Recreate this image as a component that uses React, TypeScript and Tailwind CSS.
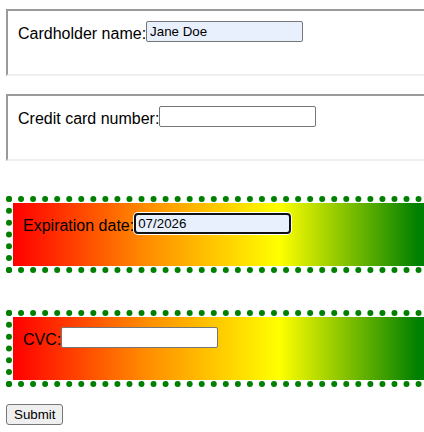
const labelFont = { fontFamily: '"Liberation Sans", Arial, sans-serif' }

function PlainField({ label, value }: { label: string; value?: string }) {
  return (
    <div className="w-[440px] border-2 border-t-[#9a9a9a] border-l-[#9a9a9a] border-b-[#efefef] border-r-[#efefef]">
      <div className="h-[63px] px-[10px] pt-[10px] text-[16px] leading-normal text-black">
        <label className="flex items-start">
          <span className="pt-[1px]">{label}</span>
          <input
            type="text"
            defaultValue={value}
            className={
              'h-[21px] w-[157px] rounded-[2px] border border-[#767676] px-[3px] text-[13.33px] text-black outline-none ' +
              (value ? 'bg-[#e8f0fe]' : 'bg-white')
            }
          />
        </label>
      </div>
    </div>
  )
}

function FancyField({
  label,
  value,
  focused,
}: {
  label: string
  value?: string
  focused?: boolean
}) {
  return (
    <div className="w-[440px] border-[6px] border-dotted border-[#008000] bg-white p-[1px]">
      <div className="h-[63px] bg-[linear-gradient(to_right,#ff0000_0px,#ff8c00_133px,#ffff00_266px,#008000_405px)] px-[10px] pt-[10px] text-[16px] leading-normal text-black">
        <label className="flex items-start">
          <span className="pt-[1px]">{label}</span>
          <input
            type="text"
            defaultValue={value}
            className={
              focused
                ? 'h-[21px] w-[157px] rounded-[4px] border-2 border-[#101010] bg-[#e8f0fe] px-[2px] text-[13.33px] text-black shadow-[0_0_0_1px_white] outline-none'
                : 'h-[21px] w-[157px] rounded-[2px] border border-[#767676] bg-white px-[3px] text-[13.33px] text-black outline-none'
            }
          />
        </label>
      </div>
    </div>
  )
}

export default function App() {
  return (
    <div className="h-[432px] w-[424px] overflow-hidden bg-white pl-[6px] pt-[9px]" style={labelFont}>
      <form onSubmit={(e) => e.preventDefault()}>
        <PlainField label="Cardholder name:" value="Jane Doe" />
        <div className="mt-[18px]">
          <PlainField label="Credit card number:" />
        </div>
        <div className="mt-[35px]">
          <FancyField label="Expiration date:" value="07/2026" focused />
        </div>
        <div className="mt-[37px]">
          <FancyField label="CVC:" />
        </div>
        <button
          type="submit"
          className="mt-[17px] h-[21px] rounded-[3px] border border-[#767676] bg-[#efefef] px-[7px] text-[13.33px] leading-none text-black"
        >
          Submit
        </button>
      </form>
    </div>
  )
}
